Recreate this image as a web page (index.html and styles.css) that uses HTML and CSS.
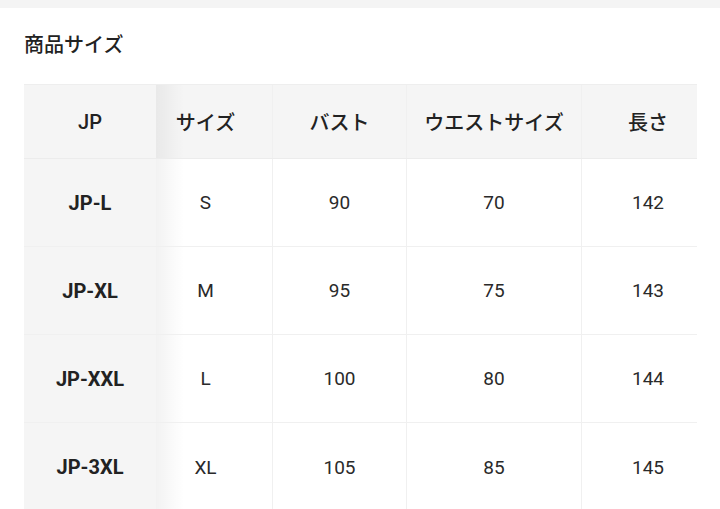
FILE: index.html
```html
<!DOCTYPE html>
<html lang="ja">
<head>
<meta charset="utf-8">
<link rel="stylesheet" href="styles.css">
</head>
<body>
<div class="topbar"></div>
<section class="panel">
  <h2 class="title">商品サイズ</h2>
  <div class="table">
    <div class="row head">
      <div class="cell c1">JP</div>
      <div class="cell c2">サイズ</div>
      <div class="cell c3">バスト</div>
      <div class="cell c4">ウエストサイズ</div>
      <div class="cell c5">長さ</div>
    </div>
    <div class="row">
      <div class="cell c1">JP-L</div>
      <div class="cell c2">S</div>
      <div class="cell c3">90</div>
      <div class="cell c4">70</div>
      <div class="cell c5">142</div>
    </div>
    <div class="row">
      <div class="cell c1">JP-XL</div>
      <div class="cell c2">M</div>
      <div class="cell c3">95</div>
      <div class="cell c4">75</div>
      <div class="cell c5">143</div>
    </div>
    <div class="row">
      <div class="cell c1">JP-XXL</div>
      <div class="cell c2">L</div>
      <div class="cell c3">100</div>
      <div class="cell c4">80</div>
      <div class="cell c5">144</div>
    </div>
    <div class="row last">
      <div class="cell c1">JP-3XL</div>
      <div class="cell c2">XL</div>
      <div class="cell c3">105</div>
      <div class="cell c4">85</div>
      <div class="cell c5">145</div>
    </div>
  </div>
</section>
</body>
</html>
```
FILE: styles.css
```css
* { box-sizing: border-box; }
html, body { margin: 0; padding: 0; background: #fff; }
body {
  font-family: Roboto, "Noto Sans CJK JP", sans-serif;
  color: #222;
  width: 720px;
  height: 509px;
  overflow: hidden;
}
.topbar { height: 8px; background: #f4f4f4; }
.panel { padding: 0 23px 0 24px; }
.title {
  margin: 0;
  height: 76px;
  display: flex;
  align-items: center;
  font-size: 20px;
  font-weight: 500;
  color: #222;
  padding-bottom: 5px;
}
.table {
  width: 673px;
  border-top: 1px solid #eeeeee;
}
.row {
  display: grid;
  grid-template-columns: 132px 117px 134px 175px 115px;
  height: 88px;
  border-bottom: 1px solid #f0f0f0;
}
.row.head { height: 74px; background: #f5f5f5; border-bottom: 1px solid #ececec; }
.row.last { border-bottom: none; }
.cell {
  display: flex;
  align-items: center;
  justify-content: center;
  font-size: 19px;
  color: #2a2a2a;
  border-right: 1px solid #f0f0f0;
}
.head .cell { font-weight: 500; font-size: 20px; color: #222; }
.c1 {
  background: #f5f5f5;
  font-weight: 700;
  font-size: 20px;
  color: #222;
  border-right: none;
}
.c2 {
  padding-right: 17px;
  background: linear-gradient(to right, rgba(0,0,0,0.05), rgba(0,0,0,0) 28px);
}
.c5 { padding-left: 17px; border-right: none; }
```
